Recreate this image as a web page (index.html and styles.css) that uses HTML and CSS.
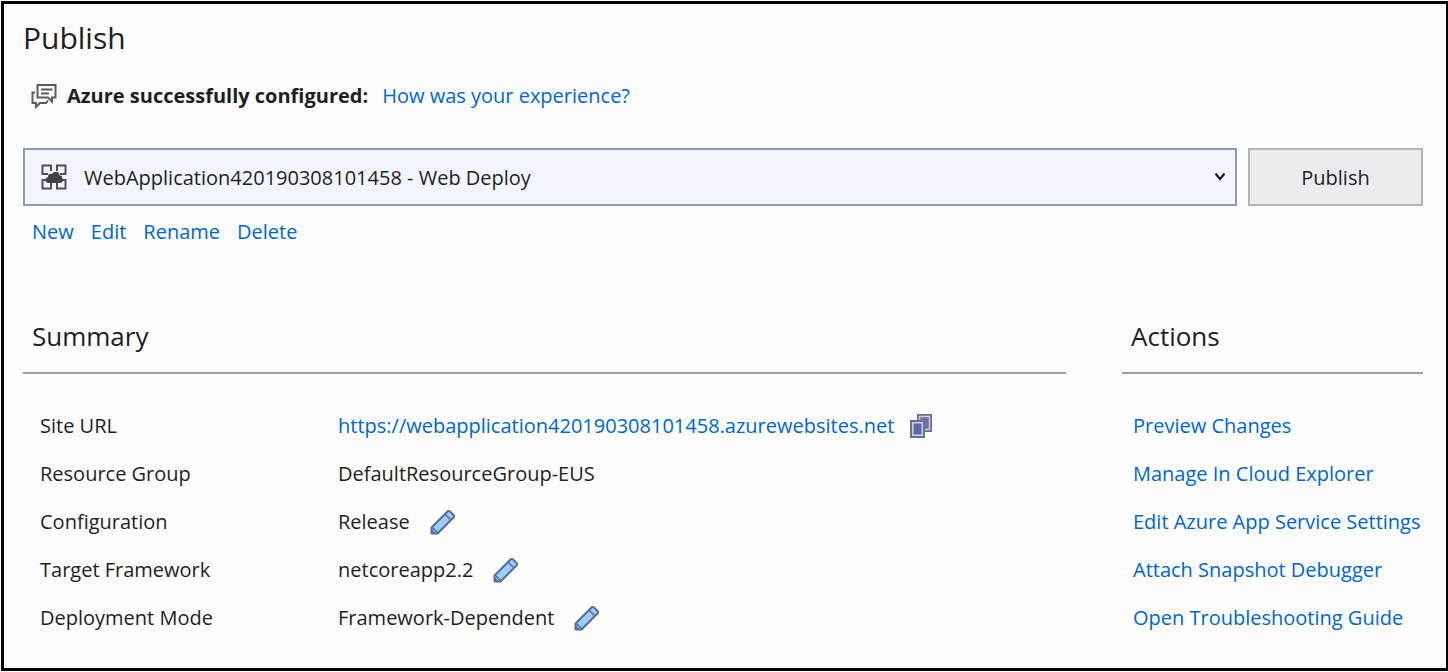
FILE: index.html
```html
<!DOCTYPE html>
<html lang="en">
<head>
<meta charset="utf-8">
<title>Publish</title>
<link rel="stylesheet" href="styles.css">
</head>
<body>
<svg class="defs" aria-hidden="true">
  <symbol id="pencil" viewBox="0 0 26 26">
    <path d="M1.500 24.500V18.500L18 2h1.500L24 6.500V8L7.500 24.500z" fill="#99d0fa" stroke="#5a6c98" stroke-width="2" stroke-linejoin="round"/>
    <path d="M15 5l6 6M2 18l6 6" fill="none" stroke="#5a6c98" stroke-width="1.500"/>
    <path d="M1 25v-5.500L6.500 25z" fill="#5a6c98"/>
  </symbol>
</svg>
<main class="window">
  <h1 class="title">Publish</h1>
  <p class="status">
    <svg class="chat" viewBox="0 0 26 26" aria-hidden="true">
      <g fill="none" stroke="#5c5c5c" stroke-width="2">
        <path d="M6.500 2H24.500v12.500h-3.500V18.500l-4-4H6.500z"/>
        <path d="M10 6.500h11.500M10 10.500h8"/>
        <path d="M4 9.500H1.500v10.500H5v4L9 20H15l2-2.500"/>
      </g>
    </svg>
    <strong>Azure successfully configured:</strong>
    <a class="feedback" href="#feedback">How was your experience?</a>
  </p>

  <div class="profile">
    <div class="picker">
      <svg class="cloud" viewBox="0 0 26 26" aria-hidden="true">
        <path d="M10 7V1.500H1.500V10H7M16 7V1.500h8.500V10H19M10 19v5.500H1.500V16H7M16 19v5.500h8.500V16H19" fill="none" stroke="#505050" stroke-width="2"/>
        <path d="M8 19c-4.500 0-4.500-5.500-1-6C6.500 10 9.500 9 11 10c2-4 8-2.500 7.500 1.500 3 0 3 2 2.500 2.500 2 1.500 1 5-2 5z" fill="#424242"/>
      </svg>
      <select class="select" aria-label="Publish profile">
        <option>WebApplication420190308101458 - Web Deploy</option>
      </select>
      <svg class="chevron" viewBox="0 0 10 8" aria-hidden="true"><path d="M0.500 0.500L5 6l4.500-5.500" fill="none" stroke="#1e1e1e" stroke-width="2.200"/></svg>
    </div>
    <button class="publish" type="button">Publish</button>
  </div>
  <nav class="links" aria-label="Profile">
    <a href="#new">New</a>
    <a href="#edit">Edit</a>
    <a href="#rename">Rename</a>
    <a href="#delete">Delete</a>
  </nav>

  <div class="columns">
    <section class="summary">
      <h2 class="heading">Summary</h2>
      <dl class="facts">
        <dt>Site URL</dt>
        <dd><a href="#site">https://webapplication420190308101458.azurewebsites.net</a>
          <button class="tool copy" type="button" aria-label="Copy URL"><svg viewBox="0 0 24 26" aria-hidden="true">
            <path d="M8 1h15v18H8z" fill="#6470a0"/><path d="M10.500 3.500h10v13h-10z" fill="#6972a5" stroke="#d0d0d0" stroke-width="1.500"/>
            <path d="M1 7h15v18H1z" fill="#6470a0"/><path d="M3.800 9.800h9.400v12.400H3.800z" fill="#60669e" stroke="#d2d2d2" stroke-width="1.500"/>
          </svg></button></dd>
        <dt>Resource Group</dt>
        <dd>DefaultResourceGroup-EUS</dd>
        <dt>Configuration</dt>
        <dd>Release <button class="tool" type="button" aria-label="Edit configuration"><svg aria-hidden="true"><use href="#pencil"/></svg></button></dd>
        <dt>Target Framework</dt>
        <dd>netcoreapp2.2 <button class="tool" type="button" aria-label="Edit target framework"><svg aria-hidden="true"><use href="#pencil"/></svg></button></dd>
        <dt>Deployment Mode</dt>
        <dd>Framework-Dependent <button class="tool" type="button" aria-label="Edit deployment mode"><svg aria-hidden="true"><use href="#pencil"/></svg></button></dd>
      </dl>
    </section>
    <section class="actions">
      <h2 class="heading">Actions</h2>
      <ul class="list">
        <li><a href="#preview">Preview Changes</a></li>
        <li><a href="#manage">Manage In Cloud Explorer</a></li>
        <li><a href="#settings">Edit Azure App Service Settings</a></li>
        <li><a href="#debugger">Attach Snapshot Debugger</a></li>
        <li><a href="#guide">Open Troubleshooting Guide</a></li>
      </ul>
    </section>
  </div>
</main>
</body>
</html>
```
FILE: styles.css
```css
* { box-sizing: border-box; }
body {
  margin: 0;
  padding: 1px 0 1px 1px;
  min-height: 100vh;
  display: flex;
  background: #fff;
  color: #1e1e1e;
  font: 20px/28px "Segoe UI", "Open Sans", "Noto Sans", sans-serif;
}
h1, h2, p, dl, dd, ul { margin: 0; padding: 0; }
a { color: #0066cc; text-decoration: none; }
.defs { position: absolute; width: 0; height: 0; }
.window {
  flex: 1;
  border: 3px solid #000;
  border-right-width: 2px;
  background: #fcfcfc;
  padding: 14px 23px 20px 19px;
}
.title { font-size: 30px; line-height: 40px; font-weight: 400; }
.status { display: flex; align-items: center; margin-top: 24px; padding-left: 8px; }
.chat { width: 26px; height: 26px; margin-right: 10px; }
.feedback { margin-left: 14px; }
.profile { display: flex; gap: 11px; margin-top: 38px; height: 58px; }
.picker { flex: 1; display: grid; align-items: center; }
.picker > * { grid-area: 1 / 1; }
.select {
  appearance: none;
  width: 100%;
  height: 100%;
  padding: 2px 40px 0 59px;
  border: 2px solid #8f9bb2;
  border-radius: 0;
  background: #f2f5ff;
  color: inherit;
  font: inherit;
}
.cloud, .chevron { z-index: 1; pointer-events: none; }
.cloud { width: 26px; height: 26px; margin-left: 18px; }
.chevron { width: 10px; height: 8px; justify-self: end; margin-right: 12px; }
.publish {
  width: 175px;
  padding: 2px 0 0;
  border: 2px solid #b4b4b6;
  background: #ececf0;
  color: inherit;
  font: inherit;
}
.links { display: flex; gap: 17px; margin-top: 12px; padding-left: 9px; }
.columns { display: grid; grid-template-columns: 1fr 301px; gap: 56px; margin-top: 72px; }
.heading {
  padding: 0 9px 18px;
  border-bottom: 2px solid #a0a0a4;
  font-size: 26px;
  line-height: 36px;
  font-weight: 400;
}
.facts, .list { margin-top: 28px; }
.facts { display: grid; grid-template-columns: 298px 1fr; grid-auto-rows: 48px; align-items: center; padding-left: 17px; }
.facts dd { display: flex; align-items: center; }
.list { display: grid; grid-auto-rows: 48px; align-items: center; padding-left: 11px; list-style: none; white-space: nowrap; }
.tool { width: 26px; height: 26px; margin-left: 20px; padding: 0; border: 0; background: none; }
.tool svg { display: block; width: 100%; height: 100%; }
.copy { width: 24px; margin-left: 15px; }
```
